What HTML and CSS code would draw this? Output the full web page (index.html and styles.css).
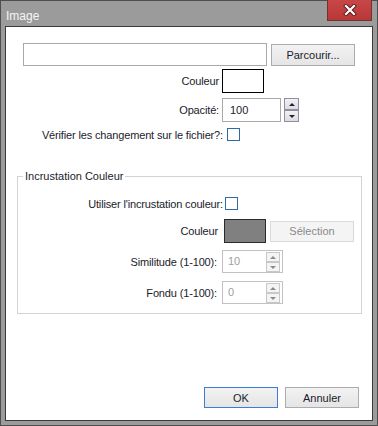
FILE: index.html
```html
<!DOCTYPE html>
<html lang="fr">
<head>
<meta charset="utf-8">
<title>Image</title>
<link rel="stylesheet" href="styles.css">
</head>
<body>
<div class="window">
  <div class="titlebar">
    <span class="title">Image</span>
    <button class="close" aria-label="Fermer">
      <svg width="14" height="12" viewBox="0 0 14 12">
        <path d="M3 2 L11 10 M11 2 L3 10" stroke="#5a1a1a" stroke-width="4" stroke-linecap="square"/>
        <path d="M3 2 L11 10 M11 2 L3 10" stroke="#ffffff" stroke-width="2.2" stroke-linecap="square"/>
      </svg>
    </button>
  </div>
  <div class="content">
    <div class="file-row">
      <div class="textbox file-input"></div>
      <button class="btn browse">Parcourir...</button>
    </div>
    <div class="row row-color">
      <span class="lbl">Couleur</span>
      <span class="swatch white"></span>
    </div>
    <div class="row row-opacity">
      <span class="lbl">Opacité:</span>
      <div class="textbox num">100</div>
      <div class="spin">
        <span class="spin-btn"><i class="up"></i></span>
        <span class="spin-btn"><i class="down"></i></span>
      </div>
    </div>
    <div class="row row-check">
      <span class="lbl lbl-check">Vérifier les changement sur le fichier?:</span>
      <span class="checkbox"></span>
    </div>

    <fieldset class="group">
      <legend>Incrustation Couleur</legend>
      <div class="grow grow-use">
        <span class="glbl glbl-use">Utiliser l'incrustation couleur:</span>
        <span class="checkbox"></span>
      </div>
      <div class="grow grow-color">
        <span class="glbl glbl-color">Couleur</span>
        <span class="swatch gray"></span>
        <button class="btn disabled select">Sélection</button>
      </div>
      <div class="grow grow-sim">
        <span class="glbl">Similitude (1-100):</span>
        <div class="textbox dnum">
          <span class="dval">10</span>
          <span class="dspin">
            <span class="dspin-btn"><i class="up"></i></span>
            <span class="dspin-btn"><i class="down"></i></span>
          </span>
        </div>
      </div>
      <div class="grow grow-fondu">
        <span class="glbl">Fondu (1-100):</span>
        <div class="textbox dnum">
          <span class="dval">0</span>
          <span class="dspin">
            <span class="dspin-btn"><i class="up"></i></span>
            <span class="dspin-btn"><i class="down"></i></span>
          </span>
        </div>
      </div>
    </fieldset>

    <div class="actions">
      <button class="btn ok">OK</button>
      <button class="btn cancel">Annuler</button>
    </div>
  </div>
</div>
</body>
</html>
```

FILE: styles.css
```css
* { box-sizing: border-box; }

html, body {
  margin: 0;
  padding: 0;
  background: #9b9b9b;
}

body {
  font-family: "Liberation Sans", Arial, sans-serif;
  font-size: 11px;
  color: #1b1b2b;
}

.window {
  width: 378px;
  height: 426px;
  border: 1px solid #4e4e4e;
  background: #9b9b9b;
  padding: 0 4px 4px 4px;
  display: flex;
  flex-direction: column;
}

.titlebar {
  height: 25px;
  display: flex;
  justify-content: space-between;
  align-items: flex-start;
}

.title {
  font-size: 12px;
  color: #f6f6f6;
  padding: 9px 0 0 1px;
  line-height: 12px;
}

.close {
  margin: -1px 1px 0 0;
  width: 45px;
  height: 21px;
  padding: 0;
  border: 1px solid #6e3333;
  border-top: none;
  background: linear-gradient(#c94646, #b83737);
  display: flex;
  align-items: center;
  justify-content: center;
}

.content {
  flex: 1;
  background: #ffffff;
  border: 1px solid #3a3a3a;
  display: flex;
  flex-direction: column;
}

.textbox {
  border: 1px solid #a9a9a9;
  background: #fff;
}

.btn {
  font-family: "Liberation Sans", Arial, sans-serif;
  font-size: 11px;
  color: #1b1b2b;
  background: linear-gradient(#f2f2f2, #e5e5e5);
  border: 1px solid #acacac;
  padding: 0;
  height: 21px;
}

.lbl, .glbl {
  letter-spacing: -0.15px;
}

.file-row {
  display: flex;
  gap: 4px;
  margin: 16px 0 0 17px;
  align-items: flex-start;
}

.file-input {
  width: 244px;
  height: 23px;
}

.browse {
  width: 84px;
  height: 22px;
  margin-top: 1px;
}

.row {
  display: flex;
  align-items: center;
}

.lbl {
  width: 216px;
  text-align: right;
  padding-right: 3px;
}

.row-color { margin-top: 3px; }
.row-opacity { margin-top: 5px; }
.row-check { margin-top: 6px; }

.swatch {
  width: 42px;
  height: 24px;
  border: 1px solid #000;
  display: block;
}
.swatch.white { background: #fff; }
.swatch.gray { background: #808080; border-color: #2a2a2a; }

.num {
  width: 59px;
  height: 24px;
  padding: 5px 0 0 7px;
  line-height: 12px;
}

.spin {
  display: flex;
  flex-direction: column;
  gap: 0;
  margin-left: 3px;
}

.spin-btn {
  width: 15px;
  height: 12px;
  border: 1px solid #8e8ea0;
  background: linear-gradient(#f2f2f4, #dcdce2);
  display: flex;
  align-items: center;
  justify-content: center;
}

.up, .down {
  width: 0;
  height: 0;
  border-left: 3px solid transparent;
  border-right: 3px solid transparent;
}
.up { border-bottom: 3px solid #222; }
.down { border-top: 3px solid #222; }

.lbl-check { width: 221px; padding-right: 4px; }

.checkbox {
  width: 13px;
  height: 13px;
  border: 1px solid #2f6aa8;
  background: #fff;
  display: block;
}

.group {
  margin: 28px 10px 0 11px;
  padding: 0 0 9px 0;
  border: 1px solid #d3d3d3;
  min-width: 0;
}

.group legend {
  margin-left: 5px;
  padding: 0 2px;
  line-height: 14px;
}

.grow {
  display: flex;
  align-items: center;
}

.glbl {
  width: 204px;
  text-align: right;
  padding-right: 5px;
}

.grow-use { margin-top: 14px; }
.glbl-use { width: 207px; padding-right: 2px; }

.grow-color { margin-top: 9px; }
.glbl-color { width: 206px; padding-right: 6px; }

.select {
  width: 84px;
  margin-left: 4px;
}

.btn.disabled {
  background: #f4f4f4;
  border-color: #dadada;
  color: #8a8a8a;
}

.grow-sim { margin-top: 7px; }
.grow-fondu { margin-top: 8px; }

.dnum {
  width: 61px;
  height: 23px;
  border-color: #c2c2c2;
  display: flex;
  justify-content: space-between;
  align-items: flex-start;
  padding: 0 2px 0 5px;
}

.dval {
  color: #a0a0a0;
  padding-top: 4px;
  line-height: 12px;
}

.dspin {
  display: flex;
  flex-direction: column;
  margin-top: 1px;
}

.dspin-btn {
  width: 14px;
  height: 10px;
  border: 1px solid #c8c8c8;
  background: #f4f4f4;
  display: flex;
  align-items: center;
  justify-content: center;
}
.dspin-btn .up { border-bottom-color: #8a8a8a; }
.dspin-btn .down { border-top-color: #8a8a8a; }

.actions {
  margin-top: auto;
  display: flex;
  justify-content: flex-end;
  gap: 7px;
  padding: 0 13px 12px 0;
}

.ok, .cancel {
  width: 74px;
  height: 21px;
}

.ok {
  border-color: #3a7bdc;
}
```
